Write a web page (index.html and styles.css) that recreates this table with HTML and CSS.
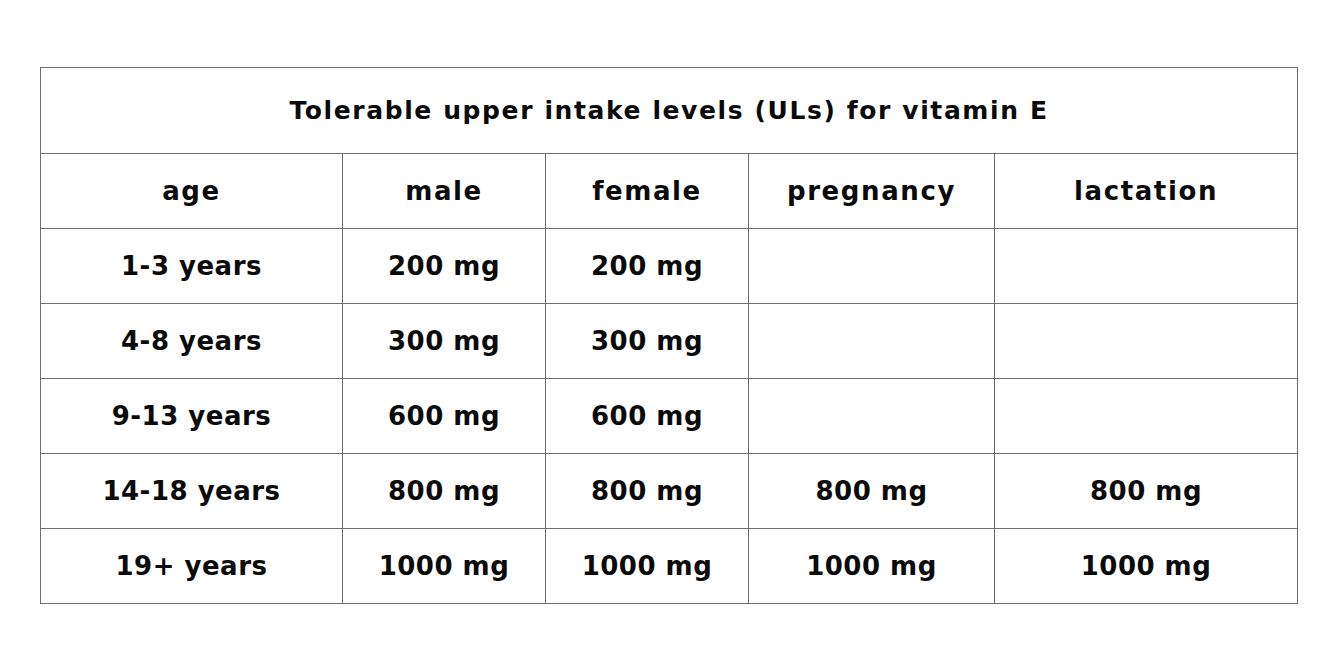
FILE: index.html
```html
<!DOCTYPE html>
<html>
<head>
<meta charset="utf-8">
<link rel="stylesheet" href="styles.css">
</head>
<body>
<div class="page">
<table class="ul-table">
  <colgroup>
    <col class="c-age"><col class="c-m"><col class="c-f"><col class="c-p"><col class="c-l">
  </colgroup>
  <tr class="title-row"><th colspan="5">Tolerable upper intake levels (ULs) for vitamin E</th></tr>
  <tr class="head-row"><th>age</th><th>male</th><th>female</th><th>pregnancy</th><th>lactation</th></tr>
  <tr><td>1-3 years</td><td>200 mg</td><td>200 mg</td><td></td><td></td></tr>
  <tr><td>4-8 years</td><td>300 mg</td><td>300 mg</td><td></td><td></td></tr>
  <tr><td>9-13 years</td><td>600 mg</td><td>600 mg</td><td></td><td></td></tr>
  <tr><td>14-18 years</td><td>800 mg</td><td>800 mg</td><td>800 mg</td><td>800 mg</td></tr>
  <tr><td>19+ years</td><td>1000 mg</td><td>1000 mg</td><td>1000 mg</td><td>1000 mg</td></tr>
</table>
</div>
</body>
</html>
```
FILE: styles.css
```css
html, body { margin: 0; padding: 0; background: #fff; }
.page { padding: 67px 0 0 40px; }
.ul-table {
  border-collapse: collapse;
  table-layout: fixed;
  width: 1257px;
  font-family: "DejaVu Sans", "Liberation Sans", sans-serif;
  font-weight: 700;
  color: #0a0a0a;
}
.c-age { width: 302px; }
.c-m { width: 203px; }
.c-f { width: 203px; }
.c-p { width: 246px; }
.c-l { width: 303px; }
.ul-table th, .ul-table td {
  border: 1px solid #6e6e6e;
  height: 74px;
  padding: 0;
  text-align: center;
  vertical-align: middle;
  font-size: 26px;
  font-weight: 700;
  letter-spacing: 0.5px;
}
.ul-table .head-row th {
  letter-spacing: 1.6px;
}
.ul-table .title-row th {
  height: 85px;
  font-size: 25px;
  letter-spacing: 1.6px;
}
```
